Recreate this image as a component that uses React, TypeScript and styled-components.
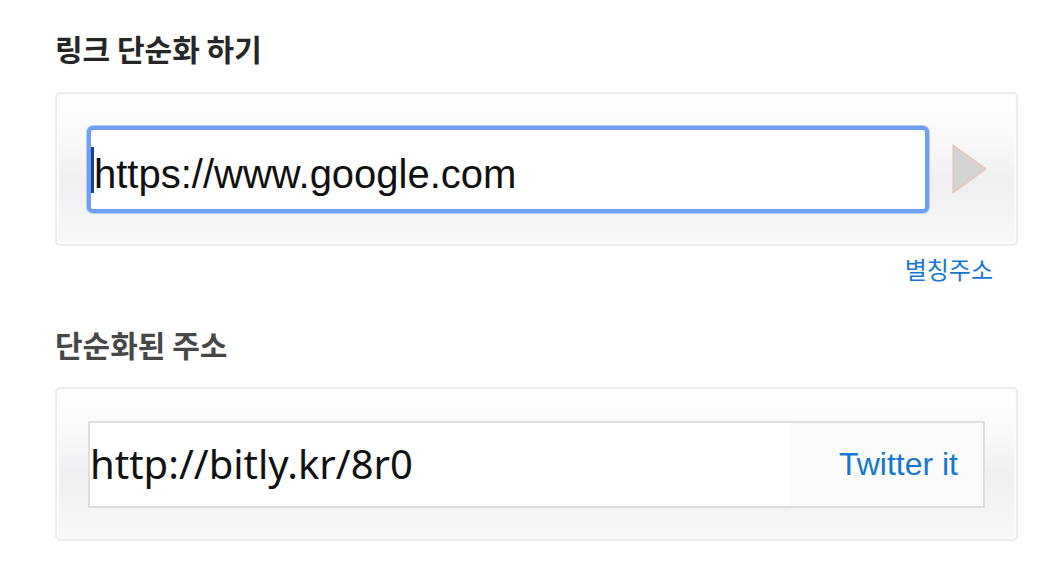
import React from "react";
import styled, { createGlobalStyle } from "styled-components";

const Global = createGlobalStyle`
  html, body { margin: 0; padding: 0; background: #ffffff; }
  body { font-family: "Liberation Sans", Arial, "Noto Sans CJK KR", sans-serif; }
`;

const Page = styled.div`
  width: 1046px;
  height: 566px;
  box-sizing: border-box;
  padding: 28px 28px 0 55px;
  display: flex;
  flex-direction: column;
`;

const Heading = styled.h2<{ $muted?: boolean; $top?: number }>`
  margin: ${(p) => p.$top ?? 0}px 0 0 0;
  font-family: "Noto Sans CJK KR", sans-serif;
  font-weight: 700;
  font-size: 30px;
  line-height: 40px;
  color: ${(p) => (p.$muted ? "#474747" : "#262626")};
`;

const Card = styled.div<{ $top: number }>`
  margin-top: ${(p) => p.$top}px;
  height: 154px;
  box-sizing: border-box;
  border: 2px solid #ececee;
  border-radius: 5px;
  box-shadow: inset 0 0 0 2px #fbfbfc;
  background: linear-gradient(
    to bottom,
    #ffffff 0%,
    #f9f9fa 30%,
    #efeff2 58%,
    #f4f4f6 80%,
    #f8f8f9 100%
  );
  display: flex;
  align-items: center;
  padding: 0 0 0 30px;
`;

const InputBox = styled.div`
  width: 842px;
  height: 87px;
  box-sizing: border-box;
  border: 4px solid #6e9ff2;
  box-shadow: 0 0 0 1px #b3cdf7;
  border-radius: 6px;
  background: #ffffff;
  display: flex;
  align-items: center;
  padding-left: 0;
`;

const Caret = styled.span`
  width: 3px;
  height: 46px;
  margin-top: 2px;
  background: #1d3f8f;
`;

const UrlText = styled.span`
  font-family: "Liberation Sans", Arial, sans-serif;
  font-size: 40px;
  color: #111111;
  line-height: 1;
  padding-top: 10px;
`;

const PlayButton = styled.div`
  width: 62px;
  display: flex;
  justify-content: center;
  align-items: center;
  margin-left: 10px;
`;

const AliasRow = styled.div`
  display: flex;
  justify-content: flex-end;
  padding: 8px 25px 0 0;
`;

const Link = styled.a<{ $size: number }>`
  font-family: "Liberation Sans", Arial, "Noto Sans CJK KR", sans-serif;
  font-size: ${(p) => p.$size}px;
  color: #1677d2;
  text-decoration: none;
`;

const AliasLink = styled(Link)`
  font-family: "Noto Sans CJK KR", sans-serif;
  line-height: 30px;
`;

const OutputBox = styled.div`
  width: 897px;
  height: 87px;
  margin-left: 1px;
  box-sizing: border-box;
  border: 2px solid #dddddf;
  background: #ffffff;
  display: flex;
  align-items: stretch;
`;

const OutputText = styled.div`
  flex: 1;
  display: flex;
  align-items: center;
  padding-left: 0;
  font-family: "Noto Sans", "Liberation Sans", sans-serif;
  font-size: 40px;
  line-height: 1;
  color: #111111;
`;

const TweetButton = styled.div`
  width: 193px;
  background: #fbfbfc;
  display: flex;
  align-items: center;
  justify-content: flex-end;
  padding-right: 25px;
  box-sizing: border-box;
`;

export default function App() {
  return (
    <>
      <Global />
      <Page>
        <Heading>링크 단순화 하기</Heading>
        <Card $top={24}>
          <InputBox>
            <Caret />
            <UrlText>https://www.google.com</UrlText>
          </InputBox>
          <PlayButton>
            <svg width="36" height="52" viewBox="0 0 36 52">
              <polygon
                points="1,2 34,26 1,50"
                fill="#d3d3d3"
                stroke="#f0c4b8"
                strokeWidth="1.2"
                strokeLinejoin="round"
              />
            </svg>
          </PlayButton>
        </Card>
        <AliasRow>
          <AliasLink $size={24} href="#">별칭주소</AliasLink>
        </AliasRow>
        <Heading $muted $top={40}>단순화된 주소</Heading>
        <Card $top={23}>
          <OutputBox>
            <OutputText>http://bitly.kr/8r0</OutputText>
            <TweetButton>
              <Link $size={32} href="#">Twitter it</Link>
            </TweetButton>
          </OutputBox>
        </Card>
      </Page>
    </>
  );
}
